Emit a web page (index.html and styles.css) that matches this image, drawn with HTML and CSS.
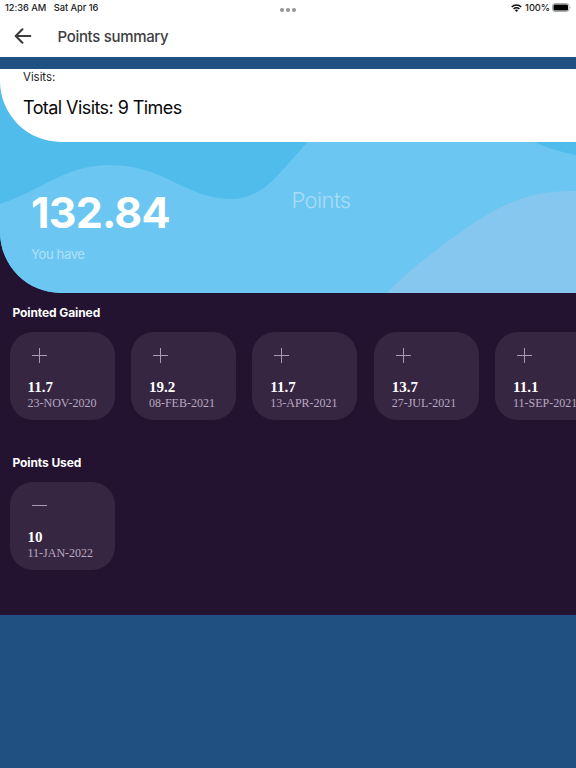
FILE: index.html
```html
<!DOCTYPE html>
<html lang="en">
<head>
<meta charset="utf-8">
<title>Points summary</title>
<link rel="stylesheet" href="styles.css">
</head>
<body>
<header class="top">
  <div class="status">
    <span class="time">12:36 AM</span><span class="date">Sat Apr 16</span>
    <span class="dots"><i></i><i></i><i></i></span>
    <svg class="wifi" viewBox="0 0 11 8"><g fill="none" stroke="#111" stroke-width="1.5"><path d="M.7 3A6.8 6.8 0 0 1 10.3 3"/><path d="M2.6 5A4.1 4.1 0 0 1 8.4 5"/></g><path d="M5.5 8 3.9 6.3a2.3 2.3 0 0 1 3.2 0z" fill="#111"/></svg>
    <span class="pct">100%</span>
    <svg class="battery" viewBox="0 0 20 9"><rect x=".5" y=".5" width="16.5" height="8" rx="2.4" fill="#fff" stroke="#aaa"/><rect x="1.5" y="1.4" width="14.5" height="6.2" rx="1.3"/><path d="M18 3.2q1.3 1.3 0 2.6z" fill="#999"/></svg>
  </div>
  <div class="bar">
    <svg class="back" viewBox="0 0 18 16"><path d="M16.3 8H2M8.4 1.3 1.7 8l6.7 6.7" fill="none" stroke="#3c3c3e" stroke-width="2.1" stroke-linecap="round" stroke-linejoin="round"/></svg>
    <h1>Points summary</h1>
  </div>
</header>
<main>
  <section class="hero">
    <svg class="waves" viewBox="0 0 576 224" preserveAspectRatio="none">
      <path fill="#6bc6f2" d="M0 135C40 122 65 96 110 96C165 96 185 130 232 130C267 130 285 95 308 73L400 55L535 73Q550 81 576 86V224H0z"/>
      <path fill="#85c7ef" d="M387 224C410 200 437 180 462 162C500 135 530 121 576 122V224z"/>
    </svg>
    <div class="visits">
      <p class="label">Visits:</p>
      <p class="total">Total Visits: 9 Times</p>
    </div>
    <div class="balance">
      <div class="amount"><strong>132.84</strong><span>You have</span></div>
      <div class="unit">Points</div>
    </div>
  </section>
  <section class="group">
    <h2>Pointed Gained</h2>
    <div class="cards">
      <article class="card"><i class="sign plus"></i><b>11.7</b><span>23-NOV-2020</span></article>
      <article class="card"><i class="sign plus"></i><b>19.2</b><span>08-FEB-2021</span></article>
      <article class="card"><i class="sign plus"></i><b>11.7</b><span>13-APR-2021</span></article>
      <article class="card"><i class="sign plus"></i><b>13.7</b><span>27-JUL-2021</span></article>
      <article class="card"><i class="sign plus"></i><b>11.1</b><span>11-SEP-2021</span></article>
    </div>
  </section>
  <section class="group">
    <h2>Points Used</h2>
    <div class="cards">
      <article class="card"><i class="sign"></i><b>10</b><span>11-JAN-2022</span></article>
    </div>
  </section>
</main>
</body>
</html>
```
FILE: styles.css
```css
* { box-sizing: border-box; }
body {
  margin: 0;
  height: 768px;
  overflow: hidden;
  background: #205081;
  font-family: Inter, "Liberation Sans", sans-serif;
}
h1, h2, p { margin: 0; }
svg { display: block; }
.top { height: 57px; background: #fff; }
.status {
  position: relative;
  display: flex;
  align-items: center;
  height: 15px;
  padding: 0 4px 0 5px;
  font-size: 9.3px;
  font-weight: 500;
  letter-spacing: -0.05px;
  color: #222;
}
.date { margin-left: 7.5px; }
.dots {
  position: absolute;
  left: 280px;
  top: 8px;
  display: flex;
  gap: 2px;
}
.dots i { width: 4px; height: 4px; border-radius: 50%; background: #949494; }
.wifi { width: 11px; height: 8px; margin-left: auto; }
.pct { margin: 0 2px 0 3px; }
.battery { width: 20px; height: 9px; }
.bar { display: flex; align-items: center; height: 42px; padding-left: 14px; }
.back { width: 18px; height: 16px; }
h1 {
  margin-left: 25.5px;
  font-size: 15px;
  font-weight: 500;
  letter-spacing: -0.32px;
  color: #404042;
}
main {
  height: 546px;
  margin-top: 12px;
  background: #241330;
}
.hero {
  position: relative;
  height: 224px;
  background: #50bcec;
  border-bottom-left-radius: 61px;
  overflow: hidden;
}
.waves { position: absolute; inset: 0; width: 576px; height: 224px; }
.visits {
  position: relative;
  height: 73px;
  padding-left: 23px;
  background: #fff;
  border-bottom-left-radius: 61px;
}
.label { font-size: 11.5px; line-height: 17px; letter-spacing: -0.05px; color: #222; }
.total { margin-top: 10px; font-size: 18px; line-height: 24px; letter-spacing: -0.57px; color: #080808; }
.balance { position: relative; display: flex; padding: 45px 0 0 31px; }
.amount { width: 260.5px; }
.amount strong {
  display: block;
  font-size: 43px;
  font-weight: 700;
  line-height: 50px;
  letter-spacing: -0.8px;
  color: #fff;
}
.amount span {
  display: block;
  margin-top: 8px;
  font-size: 13px;
  line-height: 18px;
  letter-spacing: -0.35px;
  color: #b2e0f7;
}
.unit { font-size: 22px; font-weight: 300; line-height: 26px; letter-spacing: -0.6px; color: #a8dcf7; }
.group { height: 150px; padding: 12px 0 0 9.5px; }
h2 {
  margin-left: 3px;
  font-size: 12px;
  font-weight: 700;
  line-height: 16px;
  letter-spacing: -0.1px;
  color: #fff;
}
.cards { display: flex; gap: 16.4px; margin-top: 10.5px; }
.card {
  flex: 0 0 105px;
  height: 88.5px;
  padding: 16px 0 0 18px;
  border-radius: 23px;
  background: #372642;
  font-family: "Liberation Serif", serif;
  white-space: nowrap;
}
.card b { display: block; margin-top: 16px; font-size: 15px; line-height: 17px; color: #fff; }
.card span { display: block; font-size: 12px; line-height: 14px; color: #b9a9c0; }
.sign {
  display: block;
  width: 15px;
  height: 15px;
  margin-left: 4px;
  background: linear-gradient(#a99ab0, #a99ab0) center / 15px 1px no-repeat;
}
.plus {
  background:
    linear-gradient(#a99ab0, #a99ab0) center / 15px 1px no-repeat,
    linear-gradient(#a99ab0, #a99ab0) center / 1px 15px no-repeat;
}
```
